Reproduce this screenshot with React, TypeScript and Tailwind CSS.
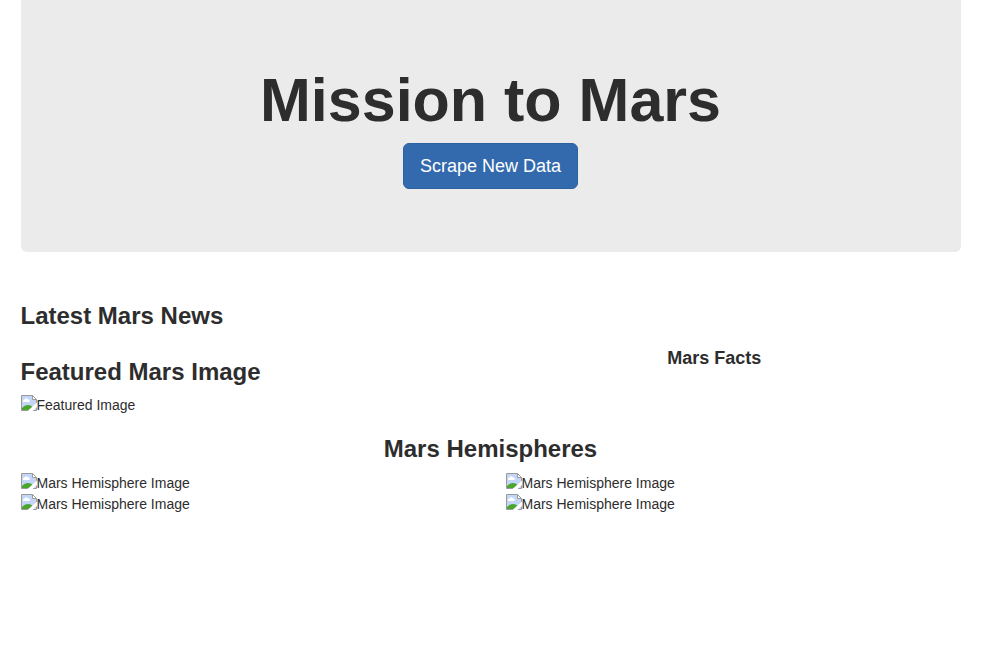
function MissingImage({ alt }: { alt: string }) {
  return (
    <div className="flex h-[21px] items-start">
      <svg className="h-4 w-4 shrink-0" viewBox="0 0 16 16" aria-hidden="true">
        <path d="M0.5 0.5H11.5L15.5 4.5V15.5H0.5Z" fill="#c3d6f7" stroke="#9a9a9a" />
        <path d="M2.5 7a1.5 1.5 0 0 1 1-2.6 1.8 1.8 0 0 1 3.4 0A1.4 1.4 0 0 1 8 7Z" fill="#fff" />
        <path d="M1 15V13C3 11 4.5 10 7 10s4 1 5 2.5V15Z" fill="#4ba52f" />
        <path d="M6.5 16L16 7.5V12L11.5 16Z" fill="#fff" />
        <path d="M11.5 0.5V4.5H15.5Z" fill="#fff" stroke="#9a9a9a" />
      </svg>
      <span className="leading-5">{alt}</span>
    </div>
  );
}

const heading = "text-2xl/[26px] font-bold";

export default function App() {
  return (
    <main className="mx-auto max-w-[970px] px-[15px] font-['Liberation_Sans',Arial,sans-serif] text-sm text-[#2d2d2d]">
      <header className="rounded-b-md bg-[#ebebeb] px-4 pt-[66px] pb-[63px] text-center">
        <h1 className="mb-2 text-[61px]/[69px] font-bold">Mission to Mars</h1>
        <button
          type="button"
          className="rounded-md border border-[#2d629e] bg-[#336aae] px-4 py-[10px] text-lg/6 text-white"
        >
          Scrape New Data
        </button>
      </header>

      <section className="pt-[51px]">
        <h2 className={heading}>Latest Mars News</h2>
      </section>

      <div className="mt-[19px] grid grid-cols-3 gap-x-[30px]">
        <section className="col-span-2 pt-[11px]">
          <h2 className={`${heading} mb-[10px]`}>Featured Mars Image</h2>
          <MissingImage alt="Featured Image" />
        </section>
        <section>
          <h3 className="text-lg/5 font-bold">Mars Facts</h3>
        </section>
      </div>

      <section className="mt-5">
        <h2 className={`${heading} mb-[11px] text-center`}>Mars Hemispheres</h2>
        <div className="grid grid-cols-2 gap-x-[30px]">
          <MissingImage alt="Mars Hemisphere Image" />
          <MissingImage alt="Mars Hemisphere Image" />
          <MissingImage alt="Mars Hemisphere Image" />
          <MissingImage alt="Mars Hemisphere Image" />
        </div>
      </section>
    </main>
  );
}
